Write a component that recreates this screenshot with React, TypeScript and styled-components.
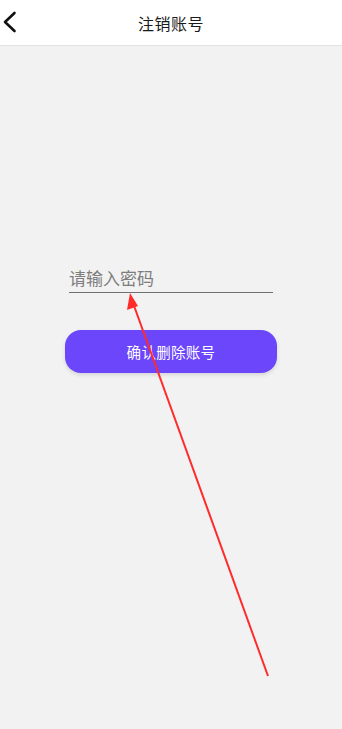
import React from 'react';
import styled, { createGlobalStyle } from 'styled-components';

const GlobalStyle = createGlobalStyle`
  html, body {
    margin: 0;
    padding: 0;
    background: #f2f2f2;
  }
  body {
    font-family: "Noto Sans", "Noto Sans CJK SC", sans-serif;
  }
`;

const App: React.FC = () => {
  return (
    <Page>
      <GlobalStyle />
      <Header>
        <BackButton aria-label="back">
          <svg width="16" height="22" viewBox="0 0 16 22" fill="none">
            <path d="M12.5 2L3 11l9.5 9" stroke="#111" strokeWidth="2.6" strokeLinecap="round" strokeLinejoin="round" />
          </svg>
        </BackButton>
        <Title>注销账号</Title>
      </Header>
      <Content>
        <PasswordInput type="password" placeholder="请输入密码" />
        <ConfirmButton>确认删除账号</ConfirmButton>
      </Content>
      <Annotation width="342" height="729" viewBox="0 0 342 729">
        <line x1="268" y1="676" x2="133" y2="303" stroke="#ff2a2a" strokeWidth="2" />
        <polygon points="130,293 127,310 138,306" fill="#ff2a2a" />
      </Annotation>
    </Page>
  );
};

const Page = styled.div`
  position: relative;
  width: 342px;
  min-height: 729px;
  background: #f2f2f2;
  overflow: hidden;
`;

const Header = styled.div`
  position: relative;
  display: flex;
  align-items: center;
  justify-content: center;
  height: 45px;
  background: #ffffff;
  border-bottom: 1px solid #e2e2e2;
`;

const BackButton = styled.button`
  position: absolute;
  left: 2px;
  top: 11px;
  display: flex;
  padding: 0;
  border: none;
  background: none;
`;

const Title = styled.h1`
  margin: 0;
  font-size: 16px;
  font-weight: 400;
  color: #1a1a1a;
  letter-spacing: 0.5px;
`;

const Content = styled.div`
  display: flex;
  flex-direction: column;
  align-items: center;
  padding-top: 220px;
`;

const PasswordInput = styled.input`
  box-sizing: border-box;
  width: 204px;
  height: 27px;
  padding: 0 0 2px;
  border: none;
  border-bottom: 1.5px solid #707070;
  background: transparent;
  font-family: inherit;
  font-size: 17px;
  color: #333;
  outline: none;

  &::placeholder {
    color: #7d7d7d;
  }
`;

const ConfirmButton = styled.button`
  margin-top: 37px;
  width: 212px;
  height: 43px;
  border: none;
  border-radius: 16px;
  background: #6b46fb;
  box-shadow: 0 2px 4px rgba(0, 0, 0, 0.12);
  color: #ffffff;
  font-family: inherit;
  font-size: 14.5px;
  letter-spacing: 0.3px;
`;

const Annotation = styled.svg`
  position: absolute;
  left: 0;
  top: 0;
  pointer-events: none;
`;

export default App;
